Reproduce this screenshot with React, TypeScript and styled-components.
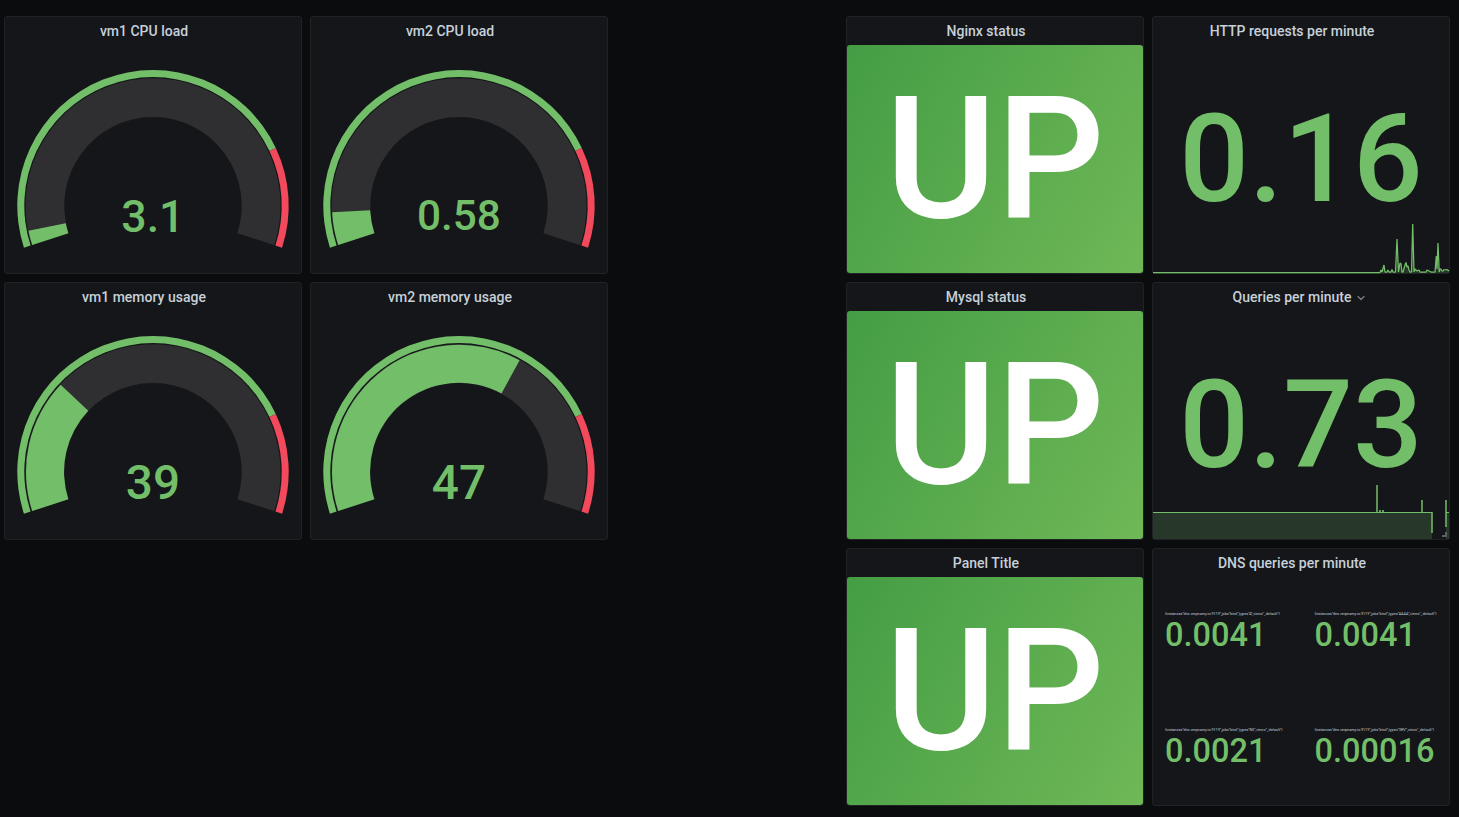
import React from 'react';
import styled, { createGlobalStyle } from 'styled-components';

const GREEN = '#73bf69';
const RED = '#f2495c';

const GlobalStyle = createGlobalStyle`
  html, body {
    margin: 0;
    height: 100%;
    background: #0b0c0e;
    overflow: hidden;
  }
  body { font-family: Roboto, "Liberation Sans", sans-serif; }
  *, *::before, *::after { box-sizing: border-box; }
`;

const Dashboard = styled.main`
  display: flex;
  justify-content: space-between;
  width: 1459px;
  height: 817px;
  padding: 16px 9px 0 4px;
`;

const PanelGrid = styled.section`
  display: grid;
  grid-template-columns: repeat(2, 298px);
  grid-auto-rows: 258px;
  gap: 8px;
  align-content: start;
`;

const PanelFrame = styled.article`
  display: flex;
  flex-direction: column;
  background: #141619;
  border: 1px solid #202226;
  border-radius: 3px;
`;

const PanelHeader = styled.header`
  display: flex;
  flex: none;
  align-items: center;
  justify-content: center;
  height: 28px;
`;

const PanelTitle = styled.h2`
  margin: 0;
  font-size: 14px;
  line-height: 28px;
  font-weight: 500;
  color: #c7d0d9;
  white-space: nowrap;
`;

const Caret = styled.svg<{ $shown: boolean }>`
  width: 8px;
  height: 8px;
  margin: 2px 4px 0 6px;
  visibility: ${(p) => (p.$shown ? 'visible' : 'hidden')};
`;

const PanelBody = styled.div`
  display: flex;
  flex-direction: column;
  flex: 1;
  min-height: 0;
`;

const Drawing = styled.svg`
  display: block;
  flex: none;
  overflow: visible;
`;

const StatusFill = styled.div`
  flex: 1;
  border-radius: 3px;
  background: linear-gradient(120deg, #449d44, #6fb857);
  text-align: center;
`;

const StatusText = styled.div`
  padding-top: 14px;
  font-size: 170px;
  line-height: 200px;
  font-weight: 500;
  color: #fff;
`;

const StatValue = styled.div`
  height: 178px;
  padding-top: 39px;
  font-size: 122.8px;
  line-height: 150px;
  font-weight: 500;
  color: ${GREEN};
  text-align: center;
`;

const SeriesGrid = styled.div`
  display: grid;
  grid-template-columns: 149.5px 1fr;
  grid-template-rows: 116px 116px;
  padding: 34px 0 0 12px;
`;

const SeriesName = styled.div`
  font-size: 3.72px;
  line-height: 6px;
  color: #c7d0d9;
  white-space: nowrap;
`;

const SeriesValue = styled.div`
  font-size: 32.5px;
  line-height: 36px;
  font-weight: 500;
  color: ${GREEN};
`;

function Panel({ title, caret = false, children }: { title: string; caret?: boolean; children: React.ReactNode }) {
  return (
    <PanelFrame>
      <PanelHeader>
        <PanelTitle>{title}</PanelTitle>
        <Caret $shown={caret} viewBox="0 0 8 8">
          <path d="M1 2.5 4 5.5 7 2.5" fill="none" stroke="#7b8087" strokeWidth="1.2" strokeLinecap="round" strokeLinejoin="round" />
        </Caret>
      </PanelHeader>
      <PanelBody>{children}</PanelBody>
    </PanelFrame>
  );
}

const CX = 148;
const CY = 160.8;

// Ring segment between two fractions of the 216 degree sweep.
function segment(from: number, to: number, inner: number, outer: number) {
  const point = (f: number, r: number) => {
    const a = ((162 + f * 216) * Math.PI) / 180;
    return `${(CX + r * Math.cos(a)).toFixed(2)} ${(CY + r * Math.sin(a)).toFixed(2)}`;
  };
  const large = (to - from) * 216 > 180 ? 1 : 0;
  return `M${point(from, outer)}A${outer} ${outer} 0 ${large} 1 ${point(to, outer)}L${point(to, inner)}A${inner} ${inner} 0 ${large} 0 ${point(from, inner)}Z`;
}

type GaugeProps = { title: string; value: string; fill: number; size: number; baseline: number };

function GaugePanel({ title, value, fill, size, baseline }: GaugeProps) {
  return (
    <Panel title={title}>
      <Drawing width="296" height="228" viewBox="0 0 296 228">
        <path d={segment(0, 1, 88.7, 127.5)} fill="#2f2e30" />
        <path d={segment(0, fill, 89, 127)} fill={GREEN} />
        <path d={segment(0, 0.8, 128.7, 135.7)} fill={GREEN} />
        <path d={segment(0.8, 1, 128.7, 135.7)} fill={RED} />
        <text x="147.9" y={baseline} fontSize={size} fontWeight="500" textAnchor="middle" fill={GREEN}>
          {value}
        </text>
      </Drawing>
    </Panel>
  );
}

function StatusPanel({ title }: { title: string }) {
  return (
    <Panel title={title}>
      <StatusFill>
        <StatusText>UP</StatusText>
      </StatusFill>
    </Panel>
  );
}

const series = [
  { type: 'A', value: '0.0041' },
  { type: 'AAAA', value: '0.0041' },
  { type: 'NS', value: '0.0021' },
  { type: 'SRV', value: '0.00016' },
];

const httpLine =
  'M0 49.5H227L228 47L229 49L231 42L232 49H234L235 47L236 49H238L239 46.5L240 49H242.5L244 16L245.5 49L247 40L248 41L249 49H250L252 42L253 39.5L254 44L255 43L256 47L257 49H258.5L259.7 1L261 49L262 46L264 48L266 47L267 49H273L274 47L276 48L278 49H282L283.3 33L284 46L285 20L286.2 49L287 46L288 46L289 48H290L291 46.5L293 47L294 46.5L296 48';

export default function App() {
  return (
    <>
      <GlobalStyle />
      <Dashboard>
        <PanelGrid>
          <GaugePanel title="vm1 CPU load" value="3.1" fill={0.031} size={44.7} baseline={187} />
          <GaugePanel title="vm2 CPU load" value="0.58" fill={0.07} size={42.3} baseline={184.5} />
          <GaugePanel title="vm1 memory usage" value="39" fill={0.284} size={47.7} baseline={188} />
          <GaugePanel title="vm2 memory usage" value="47" fill={0.632} size={47.7} baseline={188} />
        </PanelGrid>
        <PanelGrid>
          <StatusPanel title="Nginx status" />
          <Panel title="HTTP requests per minute">
            <StatValue>0.16</StatValue>
            <Drawing width="296" height="50" viewBox="0 0 296 50">
              <path d={`${httpLine}V50H0Z`} fill={GREEN} fillOpacity="0.2" />
              <path d={httpLine} fill="none" stroke={GREEN} strokeWidth="1.25" strokeLinejoin="bevel" />
            </Drawing>
          </Panel>
          <StatusPanel title="Mysql status" />
          <Panel title="Queries per minute" caret>
            <StatValue>0.73</StatValue>
            <Drawing width="296" height="50" viewBox="0 0 296 50">
              <path d="M0 23.5H279V50H0ZM293 23.5H296V50H293Z" fill={GREEN} fillOpacity="0.2" />
              <path d="M0 23.5H279M293 23.5H296" fill="none" stroke={GREEN} />
              <path d="M224 -4V23M269 11V23M279 23V44M293 11V38" fill="none" stroke={GREEN} strokeWidth="1.5" />
              <path d="M226 22H228M229 22H231" fill="none" stroke={GREEN} strokeWidth="2" strokeOpacity="0.8" />
              <path d="M289 47H293M293 43V48" fill="none" stroke="#5c5f63" strokeWidth="2" />
            </Drawing>
          </Panel>
          <StatusPanel title="Panel Title" />
          <Panel title="DNS queries per minute">
            <SeriesGrid>
              {series.map((s) => (
                <div key={s.type}>
                  <SeriesName>{`{instance="dns.verpnamy.io:9119",job="bind",type="${s.type}",view="_default"}`}</SeriesName>
                  <SeriesValue>{s.value}</SeriesValue>
                </div>
              ))}
            </SeriesGrid>
          </Panel>
        </PanelGrid>
      </Dashboard>
    </>
  );
}
